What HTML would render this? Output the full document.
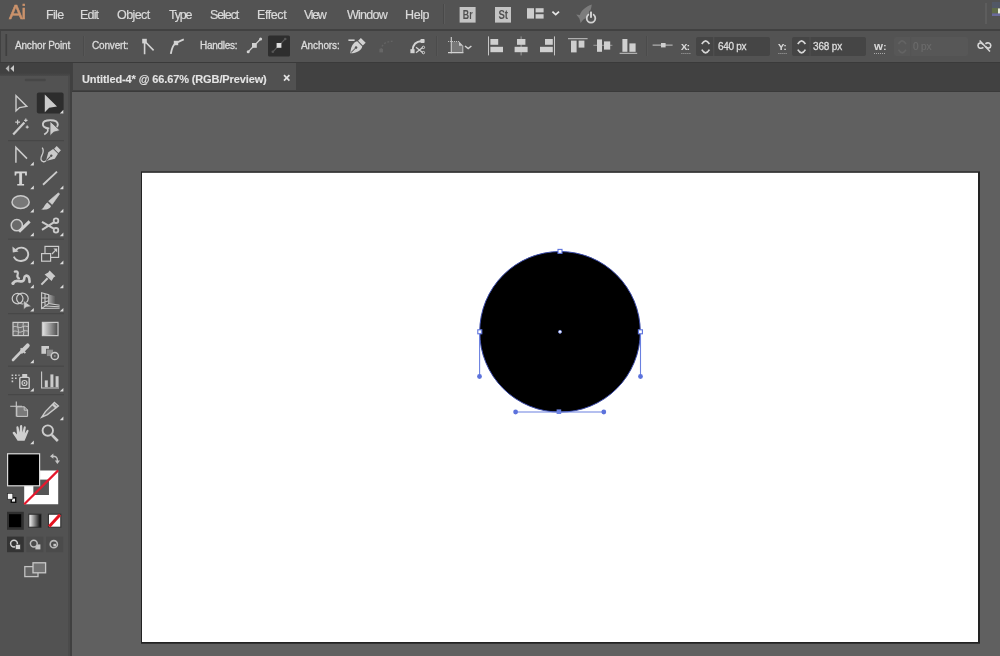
<!DOCTYPE html>
<html>
<head>
<meta charset="utf-8">
<title>Untitled-4* @ 66.67% (RGB/Preview)</title>
<style>
html,body{margin:0;padding:0;}
body{width:1000px;height:656px;overflow:hidden;position:relative;background:#606060;font-family:"Liberation Sans",sans-serif;color:#dcdcdc;}
.abs{position:absolute;}
#menubar{left:0;top:0;width:1000px;height:29px;background:#535353;}
#menuline{left:0;top:29px;width:1000px;height:2px;background:#414141;}
#ctrlbar{left:0;top:31px;width:1000px;height:31px;background:#535353;}
#strip{left:0;top:62px;width:1000px;height:30px;background:#414141;border-top:1px solid #3a3a3a;border-bottom:1px solid #3a3a3a;box-sizing:border-box;}
#tab{left:73px;top:63px;width:223px;height:27px;background:#515151;}
#toolhead{left:0;top:63px;width:70px;height:13px;background:linear-gradient(#414141 0,#414141 10px,#4a4a4a 13px);}
#toolbar{left:0;top:76px;width:70px;height:580px;background:#525252;border-right:2px solid #4b4b4b;box-sizing:border-box;}
#toolsep{left:70px;top:63px;width:2px;height:593px;background:#404040;}
#canvas{left:72px;top:92px;width:928px;height:564px;background:#606060;}
#artboard{left:141px;top:171px;width:838px;height:472px;background:#fff;border:1px solid #151515;box-sizing:border-box;}
.t{position:absolute;white-space:nowrap;line-height:1;will-change:transform;}
.fld{position:absolute;top:37px;height:19px;background:#454545;border-radius:2px;}
svg{position:absolute;left:0;top:0;will-change:transform;}
</style>
</head>
<body>
<div id="menubar" class="abs"></div>
<div id="menuline" class="abs"></div>
<div id="ctrlbar" class="abs"></div>
<div id="strip" class="abs"></div>
<div id="tab" class="abs"></div>
<div id="canvas" class="abs"></div>
<div id="toolhead" class="abs"></div>
<div id="toolbar" class="abs"></div>
<div id="toolsep" class="abs"></div>
<div class="fld" style="left:696px;width:74px;"></div>
<div class="fld" style="left:792px;width:74px;"></div>
<div class="fld" style="left:894px;width:74px;background:#575757;"></div>
<span class="t" style="left:8.80px;top:2.35px;font-size:20.5px;color:#cc936c;letter-spacing:-1.073px;-webkit-text-stroke:0.55px #cc936c;">Ai</span>
<span class="t" style="left:45.80px;top:8.75px;font-size:12.5px;color:#dadada;letter-spacing:-0.663px;-webkit-text-stroke:0.2px #dadada;">File</span>
<span class="t" style="left:79.80px;top:8.75px;font-size:12.5px;color:#dadada;letter-spacing:-0.822px;-webkit-text-stroke:0.2px #dadada;">Edit</span>
<span class="t" style="left:117.20px;top:8.75px;font-size:12.5px;color:#dadada;letter-spacing:-0.571px;-webkit-text-stroke:0.2px #dadada;">Object</span>
<span class="t" style="left:168.60px;top:8.75px;font-size:12.5px;color:#dadada;letter-spacing:-1.249px;-webkit-text-stroke:0.2px #dadada;">Type</span>
<span class="t" style="left:210.20px;top:8.75px;font-size:12.5px;color:#dadada;letter-spacing:-1.094px;-webkit-text-stroke:0.2px #dadada;">Select</span>
<span class="t" style="left:257.40px;top:8.75px;font-size:12.5px;color:#dadada;letter-spacing:-0.412px;-webkit-text-stroke:0.2px #dadada;">Effect</span>
<span class="t" style="left:304.20px;top:8.75px;font-size:12.5px;color:#dadada;letter-spacing:-1.347px;-webkit-text-stroke:0.2px #dadada;">View</span>
<span class="t" style="left:347.20px;top:8.75px;font-size:12.5px;color:#dadada;letter-spacing:-0.726px;-webkit-text-stroke:0.2px #dadada;">Window</span>
<span class="t" style="left:405.40px;top:8.75px;font-size:12.5px;color:#dadada;letter-spacing:-0.385px;-webkit-text-stroke:0.2px #dadada;">Help</span>
<span class="t" style="left:14.60px;top:41.20px;font-size:10px;color:#dcdcdc;letter-spacing:-0.189px;-webkit-text-stroke:0.3px #dcdcdc;">Anchor Point</span>
<span class="t" style="left:92.20px;top:41.20px;font-size:10px;color:#dcdcdc;letter-spacing:-0.174px;-webkit-text-stroke:0.3px #dcdcdc;">Convert:</span>
<span class="t" style="left:200.40px;top:41.20px;font-size:10px;color:#dcdcdc;letter-spacing:-0.270px;-webkit-text-stroke:0.3px #dcdcdc;">Handles:</span>
<span class="t" style="left:301.00px;top:41.20px;font-size:10px;color:#dcdcdc;letter-spacing:-0.098px;-webkit-text-stroke:0.3px #dcdcdc;">Anchors:</span>
<span class="t" style="left:681.40px;top:42.05px;font-size:9.5px;color:#dcdcdc;letter-spacing:-0.536px;font-weight:bold;-webkit-text-stroke:0.1px #dcdcdc;">X:</span>
<span class="t" style="left:778.40px;top:42.05px;font-size:9.5px;color:#dcdcdc;letter-spacing:-0.231px;font-weight:bold;-webkit-text-stroke:0.1px #dcdcdc;">Y:</span>
<span class="t" style="left:873.80px;top:42.05px;font-size:9.5px;color:#dcdcdc;letter-spacing:0.405px;font-weight:bold;-webkit-text-stroke:0.1px #dcdcdc;">W:</span>
<span class="t" style="left:717.60px;top:41.70px;font-size:10px;color:#dcdcdc;letter-spacing:-0.325px;-webkit-text-stroke:0.3px #dcdcdc;">640 px</span>
<span class="t" style="left:812.80px;top:41.70px;font-size:10px;color:#dcdcdc;letter-spacing:-0.165px;-webkit-text-stroke:0.3px #dcdcdc;">368 px</span>
<span class="t" style="left:912.60px;top:41.70px;font-size:10px;color:#6b6b6b;letter-spacing:-0.167px;-webkit-text-stroke:0.2px #6b6b6b;">0 px</span>
<span class="t" style="left:82.20px;top:73.50px;font-size:11px;color:#e4e4e4;letter-spacing:-0.117px;font-weight:bold;-webkit-text-stroke:0.1px #e4e4e4;">Untitled-4* @ 66.67% (RGB/Preview)</span>
<svg id="icons" width="1000" height="656" viewBox="0 0 1000 656">
<!-- artwork -->
<rect x="141" y="171.4" width="839" height="472.3" fill="#222"/>
<rect x="142" y="172.8" width="836" height="469.2" fill="#fff"/>
<circle cx="560" cy="331.8" r="80.3" fill="#000"/>

<!-- ===== menu bar icons ===== -->
<g id="appbar">
<rect x="443" y="4" width="1" height="20" fill="#494949"/>
<rect x="444" y="4" width="1" height="20" fill="#5b5b5b"/>
<rect x="459.6" y="7" width="16" height="15.6" fill="#c4c4c4"/>
<text x="462.8" y="19" font-family="Liberation Sans, sans-serif" font-size="12" font-weight="bold" fill="#505050" textLength="9.8" lengthAdjust="spacingAndGlyphs">Br</text>
<rect x="495" y="7" width="16" height="15.6" fill="#c4c4c4"/>
<text x="498.4" y="19" font-family="Liberation Sans, sans-serif" font-size="12" font-weight="bold" fill="#505050" textLength="9.6" lengthAdjust="spacingAndGlyphs">St</text>
<rect x="527" y="8.2" width="7" height="10.4" fill="#cdcdcd"/>
<rect x="535.6" y="8.2" width="8" height="4.2" fill="#cdcdcd"/>
<rect x="535.6" y="14.2" width="8" height="4.4" fill="#cdcdcd"/>
<path d="M552.4 11.6 L555.7 14.6 L559 11.6" fill="none" stroke="#e6e6e6" stroke-width="1.8"/>
<!-- gpu rocket + power -->
<path d="M591.8 4.5 C586 6.5 581.5 10 579.8 15 L576.2 14.6 L579.4 18.4 L580.6 23 L583.4 19.6 C587 18 591 12 591.8 4.5 Z" fill="#7c7c7c"/>
<circle cx="591" cy="18.3" r="4.3" fill="#535353" stroke="#d2d2d2" stroke-width="1.8"/>
<rect x="589.1" y="10.8" width="3.8" height="7" fill="#535353"/>
<rect x="590.1" y="11.6" width="1.8" height="6.2" fill="#dcdcdc"/>
<rect x="985" y="3" width="2" height="21" fill="#5d5d5d"/>
<rect x="992" y="2" width="8" height="6" fill="#525866"/>
<rect x="992" y="8" width="6" height="5.4" fill="#5f6b48"/>
<rect x="998" y="8.4" width="2" height="6" fill="#e8ecd8"/>
<rect x="992" y="13.4" width="8" height="2.6" fill="#6a6a9a"/>
</g>

<!-- ===== control bar ===== -->
<g id="ctrl" fill="none" stroke="#d2d2d2" stroke-width="1.3">
<!-- gripper -->
<rect x="5.4" y="34" width="1.7" height="22" fill="#3f3f3f" stroke="none"/>
<rect x="0" y="31" width="1" height="31" fill="#424242" stroke="none"/>
<!-- separators -->
<rect x="83" y="36" width="1" height="20" fill="#4b4b4b" stroke="none"/>
<rect x="84" y="36" width="1" height="20" fill="#575757" stroke="none"/>
<rect x="436" y="36" width="1" height="20" fill="#4b4b4b" stroke="none"/>
<rect x="437" y="36" width="1" height="20" fill="#575757" stroke="none"/>
<rect x="646" y="36" width="1" height="20" fill="#4b4b4b" stroke="none"/>
<rect x="647" y="36" width="1" height="20" fill="#575757" stroke="none"/>
<!-- convert to corner -->
<path d="M144.6 42 L144.6 54.2 M145 41.5 L153.6 50.4" stroke-width="1.6"/>
<rect x="142.2" y="38.8" width="4.6" height="4.6" fill="#d2d2d2" stroke="none"/>
<!-- convert to smooth -->
<path d="M170.8 53.8 C172 47 173 44.5 176 43 C179 41.5 181 40.5 183.8 39.4" stroke-width="1.9"/>
<rect x="173.8" y="40.8" width="4.4" height="4.4" fill="#d2d2d2" stroke="none"/>
<!-- handles: show -->
<path d="M248.4 51.6 L260.4 39.2"/>
<circle cx="248.2" cy="51.8" r="1.5" fill="#d2d2d2" stroke="none"/>
<circle cx="260.6" cy="39" r="1.5" fill="#d2d2d2" stroke="none"/>
<rect x="252" y="43" width="4.8" height="4.8" fill="#d2d2d2" stroke="none"/>
<!-- handles: hide (selected) -->
<rect x="268" y="35.6" width="22" height="20.8" rx="1.5" fill="#2e2e2e" stroke="none"/>
<path d="M272.8 51.8 L285 39.2" stroke="#5a5a5a" stroke-width="1.2"/>
<circle cx="285.2" cy="39" r="1.3" fill="#575757" stroke="none"/>
<circle cx="272.8" cy="51.8" r="1.3" fill="#575757" stroke="none"/>
<rect x="276.6" y="43" width="4.8" height="4.8" fill="#dedede" stroke="none"/>
</g>
<g id="ctrl2" fill="none" stroke="#d2d2d2" stroke-width="1.3">
<!-- remove anchor pen -->
<g transform="translate(357.2 46.4) rotate(45)">
<path d="M-3.4 -8.6 L3.4 -8.6 L3.4 -4.6 L-3.4 -4.6 Z" fill="#d2d2d2" stroke="none"/>
<path d="M-3.6 -3.6 L3.6 -3.6 C5.6 0 4.6 4.4 0 9.8 C-4.6 4.4 -5.6 0 -3.6 -3.6 Z" fill="#d2d2d2" stroke="none"/>
<path d="M0 8.6 L0 2.6" stroke="#535353" stroke-width="1"/>
<circle cx="0" cy="1.6" r="1.3" fill="#535353" stroke="none"/>
</g>
<path d="M348.4 40.2 L354.6 40.2" stroke-width="1.6"/>
<!-- connect endpoints (disabled) -->
<path d="M381 50 C381.5 45 385 41.5 392.5 41.2" stroke="#646464" stroke-width="1.4" stroke-dasharray="2 1.6"/>
<rect x="379.4" y="48.8" width="3.6" height="3.6" fill="#666" stroke="none"/>
<!-- cut path -->
<path d="M412.6 50 C413 44.6 416.4 41.4 421.6 41" stroke-width="1.9"/>
<rect x="410.4" y="49.2" width="4.2" height="4" fill="#d2d2d2" stroke="none"/>
<rect x="420.4" y="39" width="4.2" height="4" rx="0.8" fill="#d2d2d2" stroke="none"/>
<path d="M416 52.8 L422.6 47.6 M416 47.2 L422.6 52.4" stroke-width="1.3"/>
<circle cx="423.4" cy="47.4" r="1.2" stroke-width="1"/>
<circle cx="423.4" cy="52.6" r="1.2" stroke-width="1"/>
<!-- isolate -->
<path d="M451.3 37 L451.3 53.4 M448 52.6 L463.4 52.6" stroke-width="1.1"/>
<path d="M448 41.5 L459 41.5" stroke-width="1" stroke="#bdbdbd" stroke-dasharray="1.2 0.8"/>
<path d="M452 42 L459.2 42 L462.8 45.8 L462.8 52 L452 52 Z" fill="#777" stroke="none"/>
<path d="M459 41.4 L463.2 45.8 L459 45.8 Z" fill="#c8c8c8" stroke="none"/>
<path d="M462.8 45.6 L462.8 52.6" stroke-width="1" stroke="#c4c4c4"/>
<path d="M465 46 L468.2 48.6 L471.4 46" stroke-width="1.5"/>
</g>
<!-- align icons -->
<g id="align" fill="#cfcfcf" stroke="none">
<rect x="488" y="36.4" width="1" height="19" fill="#c6c6c6"/>
<rect x="490.4" y="39" width="7.8" height="5.8"/>
<rect x="490.4" y="46.8" width="12.6" height="5.4"/>
<rect x="520.6" y="36.4" width="1" height="19" fill="#9a9a9a"/>
<rect x="517" y="39" width="8.4" height="5.8"/>
<rect x="514.6" y="46.8" width="13" height="5.4"/>
<rect x="554" y="36.4" width="1" height="19" fill="#c6c6c6"/>
<rect x="545" y="39" width="7.8" height="5.8"/>
<rect x="540" y="46.8" width="12.8" height="5.4"/>
<rect x="568" y="38.2" width="19.6" height="1" fill="#c6c6c6"/>
<rect x="571" y="40.6" width="5.6" height="11.8"/>
<rect x="578.6" y="40.6" width="5.8" height="7"/>
<rect x="593.4" y="44.8" width="19" height="1" fill="#9a9a9a"/>
<rect x="597" y="39.4" width="5" height="12.4"/>
<rect x="604" y="41.4" width="6.2" height="8.2"/>
<rect x="619.6" y="52.8" width="17.6" height="1" fill="#c6c6c6"/>
<rect x="622.4" y="39" width="5" height="12.8"/>
<rect x="629.4" y="43.4" width="6.2" height="8.4"/>
<!-- distribute -->
<rect x="652.6" y="44.6" width="20" height="1" fill="#c6c6c6"/>
<rect x="661" y="43" width="4.6" height="4.4"/>
</g>
<!-- spinners, underline dots, link -->
<g id="fields" fill="none" stroke="#d6d6d6" stroke-width="1.7">
<path d="M701.8 44 Q705.6 37.6 709.4 44 M701.8 49.6 Q705.6 56 709.4 49.6"/>
<path d="M797.8 44 Q801.6 37.6 805.4 44 M797.8 49.6 Q801.6 56 805.4 49.6"/>
<path d="M898.4 44 Q902.2 37.6 906 44 M898.4 49.6 Q902.2 56 906 49.6" stroke="#636363"/>
<path d="M681.4 53.5 L690.4 53.5 M778.4 53.5 L787 53.5 M874 53.5 L886 53.5" stroke="#a8a8a8" stroke-width="1" stroke-dasharray="1 1"/>
<rect x="713" y="37" width="1.4" height="19" fill="#4e4e4e" stroke="none"/>
<rect x="809.4" y="37" width="1.4" height="19" fill="#4e4e4e" stroke="none"/>
<rect x="910" y="36" width="1.2" height="20" fill="#545454" stroke="none"/>
<!-- broken link -->
<path d="M983 44.6 C981 42 978 43 978 45.6 C978 48.4 981.4 49 983.4 47.4" stroke-width="1.6"/>
<path d="M985.6 46.6 C987.6 49 990.8 48.4 990.8 45.6 C990.8 43 987.6 42 985.4 43.8" stroke-width="1.6"/>
<path d="M979.6 40.4 L990 51.4" stroke-width="1.5"/>
</g>

<!-- ===== toolbar ===== -->
<g id="tb-chrome" stroke="none">
<path d="M5.6 68.5 L9.2 65.1 L9.2 71.9 Z" fill="#b4b4b4"/><path d="M10.4 68.5 L14 65.1 L14 71.9 Z" fill="#cacaca"/>
<path d="M26 80 L44.6 80" stroke="#474747" stroke-width="2.6" stroke-linecap="round" fill="none"/>
<rect x="8" y="140" width="56" height="1.2" fill="#474747"/>
<rect x="8" y="238.6" width="56" height="1.2" fill="#474747"/>
<rect x="8" y="313" width="56" height="1.2" fill="#474747"/>
<rect x="8" y="365.6" width="56" height="1.2" fill="#474747"/>
<rect x="8" y="394" width="56" height="1.2" fill="#474747"/>
</g>
<g id="tools" fill="none" stroke="#cbcbcb" stroke-width="1.5" stroke-linejoin="miter">
<!-- selection (outline arrow) -->
<path d="M16 95.6 L16 111 L19.6 107.6 L26.8 106.4 Z" stroke-width="1.4"/>
<!-- direct selection (selected) -->
<rect x="36.8" y="92.4" width="26.8" height="21" rx="2" fill="#2d2d2d" stroke="none"/>
<path d="M44.8 94.4 L44.8 112.2 L49.2 107.8 L57 106.6 Z" fill="#cbcbcb" stroke="none"/>
<!-- magic wand -->
<path d="M13.2 134.4 L24.4 122.4" stroke-width="2.2"/>
<path d="M17.6 119.8 L17.6 124.6 M15.2 122.2 L20 122.2 M25.8 118.6 L25.8 122 M24.1 120.3 L27.5 120.3 M27.2 125.6 L27.2 128.6 M25.7 127.1 L28.7 127.1" stroke-width="1.2"/>
<!-- lasso -->
<path d="M49.6 128.4 C44.6 128.6 42.6 126.2 42.9 123.8 C43.2 121 46.6 120.2 50.4 120.2 C54.8 120.2 57.7 121.8 57.8 124.4 C57.9 125.6 57.4 126.6 56.6 127.2" stroke-width="1.9"/>
<path d="M45.4 127.2 C47.8 128.4 48.6 130.6 47.2 132 C46.2 133.2 45.2 134 44.2 134.6" stroke-width="1.7"/>
<path d="M50 121.2 L50 135.8 L53.6 132.2 L60 130.5 Z" fill="#cbcbcb" stroke="#535353" stroke-width="0.8"/>
<!-- anchor point tool -->
<path d="M15.9 162.8 L15.9 147.4 L27 158.6" stroke-width="1.5"/>
<!-- curvature tool -->
<g transform="translate(52 155) rotate(45)">
<path d="M-3 -9.6 L3 -9.6 L3 -6 L-3 -6 Z" fill="#cbcbcb" stroke="none"/>
<path d="M-3.4 -5 L3.4 -5 L4.6 0.6 L0 8.6 L-4.6 0.6 Z" fill="#cbcbcb" stroke="none"/>
<path d="M0 8 L0 2" stroke="#535353" stroke-width="1"/>
<circle cx="0" cy="1" r="1.2" fill="#535353" stroke="none"/>
</g>
<path d="M42.2 147.6 C44.2 150.4 43.2 153 41.8 155.6 C40.4 158.4 40.6 161 43 161.6 C44.4 162 45.4 161.4 46 160.6" stroke-width="1.3"/>
<!-- line tool -->
<path d="M43 184.8 L57 171.6" stroke-width="1.9"/>
<!-- ellipse tool -->
<ellipse cx="20.6" cy="202.2" rx="8.6" ry="6.4" fill="#787878" stroke-width="1.5"/>
<!-- paintbrush -->
<path d="M58.4 192.8 L59.6 194 L52.2 204.4 L48.6 201.2 Z" fill="#cbcbcb" stroke="#cbcbcb" stroke-width="0.6" stroke-linejoin="round"/>
<path d="M47.4 202.6 L51 206 C50 209.4 45.4 210 41.2 209.5 C44.6 207.8 44.4 204.6 47.4 202.6 Z" fill="#cbcbcb" stroke="none"/>
<!-- shaper tool -->
<circle cx="16.8" cy="225.2" r="5.6" fill="#6a6a6a" stroke-width="1.5"/>
<path d="M19 231.6 L29.6 221.4" stroke-width="3" stroke="#d0d0d0"/>
<!-- scissors -->
<path d="M42 221.8 L54.2 228.8 M42 229.8 L54.2 222.2" stroke-width="2"/>
<circle cx="56" cy="220.7" r="2.3" stroke-width="1.8"/>
<circle cx="56" cy="230.3" r="2.3" stroke-width="1.8"/>
<!-- rotate -->
<path d="M15.6 250.4 C18.6 246.6 24.6 246.6 27.2 250.8 C29.6 254.8 27.4 260 22.4 260.8 C18.6 261.4 15.2 259.6 13.8 256.6" stroke-width="1.9"/>
<path d="M12.4 246.6 L12.8 252.4 L18.6 251.6 Z" fill="#cbcbcb" stroke="none"/>
<!-- scale -->
<rect x="45" y="246.4" width="13.6" height="11" stroke-width="1.2"/>
<rect x="41.6" y="253.6" width="9" height="7.6" stroke-width="1.2" fill="#535353"/>
<path d="M52 254 L56.4 249.4" stroke-width="1.3"/>
<path d="M53.4 248.6 L57.2 248.6 L57.2 252.4 Z" fill="#cbcbcb" stroke="none"/>
<!-- width/warp tool -->
<path d="M13 283 C15 280 17.4 280.6 19.6 281.2 C23.4 282.2 24.4 279.6 24.4 277.6 C24.4 275.6 27 274.8 28.4 276.6 C29.6 278.2 29.4 280.2 29.6 282" stroke-width="2.6" stroke-linecap="round"/>
<path d="M14.8 271.6 C17.4 270.6 18.4 272.6 17.6 274.6 C17 276.2 17.4 277.6 19 278.4" stroke-width="2.2" stroke-linecap="round"/>
<circle cx="13" cy="283.4" r="1.6" fill="#cbcbcb" stroke="none"/>
<!-- puppet pin -->
<path d="M49.6 270.6 L55.4 276.2 L53.6 277.4 L51.6 281 L44.6 274.4 L48.2 272.4 Z" fill="#cbcbcb" stroke="none"/>
<path d="M47.6 278.2 L41.4 284.6" stroke-width="2"/>
<!-- shape builder -->
<ellipse cx="17.6" cy="298.6" rx="5.4" ry="5.2" stroke-width="1.2"/>
<ellipse cx="22.4" cy="298.6" rx="5.8" ry="5.4" stroke-width="1.2"/>
<path d="M23.6 300.6 L23.8 309.6 L26.2 307.2 L31.4 306.4 Z" fill="#cbcbcb" stroke="#535353" stroke-width="0.6"/>
<!-- perspective grid -->
<path d="M41.6 292.8 L48.6 294.6 L48.6 303.6 L41.6 308.4 Z M45 293.8 L45 306 M41.6 298 L48.6 297.8 M41.6 303 L48.6 300.8" stroke-width="1.1"/>
<path d="M48.6 294.6 L55.6 296.2 L55.6 304.6 L48.6 303.6 Z" fill="url(#gradPersp)" stroke="none"/>
<path d="M48.6 303.6 L59.6 305.2 M41.6 308.4 L59.6 308.2 M45.4 306 L59.6 306.8" stroke-width="1"/>
<!-- mesh -->
<rect x="13" y="322.4" width="15.4" height="13.2" fill="#6e6e6e" stroke-width="1.2"/>
<path d="M13 327 C16 325 19 329 22 327 C25 325 26.6 327 28.4 326.4 M13 331.6 C16 329.6 19 333.6 22 331.6 C25 329.6 26.6 331.4 28.4 331 M18 322.4 C16.6 326 19.6 330 18 335.6 M23.4 322.4 C22 326 25 330 23.4 335.6" stroke-width="0.9"/>
<!-- gradient -->
<rect x="42.4" y="322.4" width="15.6" height="13.2" fill="url(#gradTool)" stroke-width="1.2"/>
<!-- eyedropper -->
<path d="M13 360 L23 349.6" stroke-width="2.6" stroke-linecap="round"/>
<path d="M22 351.4 L27.6 345.6" stroke-width="4.2" stroke-linecap="round"/>
<path d="M20.6 348.4 L25.4 353.2" stroke-width="1.8"/>
<!-- blend -->
<rect x="41.4" y="346" width="7.6" height="7.8" fill="#cbcbcb" stroke="none"/>
<rect x="46.4" y="349.2" width="7" height="7.2" fill="#8c8c8c" stroke="#535353" stroke-width="0.8"/>
<circle cx="54.8" cy="356" r="3.6" fill="#535353" stroke-width="1.5"/>
<circle cx="54.8" cy="356" r="1" fill="#8a8a8a" stroke="none"/>
<!-- symbol sprayer -->
<path d="M11.6 375.2 L13.2 375.2 M15 375.2 L16.6 375.2 M18.4 375.2 L19.6 375.2 M11.6 378.2 L13.2 378.2 M15 378.2 L16.6 378.2 M11.6 381.4 L13.2 381.4" stroke-width="1.6"/>
<rect x="19.8" y="377.4" width="9.4" height="11" rx="1" stroke-width="1.4"/>
<rect x="22.2" y="374" width="5" height="3" fill="#cbcbcb" stroke="none"/>
<circle cx="24.5" cy="383" r="2.5" stroke-width="1.2"/>
<circle cx="24.5" cy="383" r="0.9" fill="#cbcbcb" stroke="none"/>
<!-- column graph -->
<path d="M41.6 371.4 L41.6 388 L59 388" stroke-width="1.1"/>
<rect x="44.8" y="380.4" width="3" height="6.8" fill="#cbcbcb" stroke="none"/>
<rect x="50.4" y="374.4" width="3" height="12.8" fill="#cbcbcb" stroke="none"/>
<rect x="55.6" y="376.2" width="3" height="11" fill="#cbcbcb" stroke="none"/>
<!-- artboard tool -->
<path d="M16.3 401.4 L16.3 416.6 M10.2 406.3 L22 406.3" stroke-width="1.1"/>
<path d="M16.8 406.8 L24.4 406.8 L27.6 410 L27.6 416.4 L16.8 416.4 Z" fill="#7a7a7a" stroke-width="1"/>
<path d="M24.2 406.6 L24.2 410.2 L27.8 410.2" stroke-width="0.9"/>
<!-- slice tool -->
<path d="M54.4 402.4 L58.4 406 L47.4 414.6 L41.8 417.2 L45.4 411.6 Z" stroke-width="1.4" fill="#6a6a6a"/>
<path d="M52.6 404.2 L56.6 407.8" stroke-width="2.4"/>
<!-- hand -->
<path d="M17.6 440.8 C16 438 14.6 435.6 12.8 433.4 C12.2 432.2 13.6 431.2 14.8 432 L17 434.4 L16.4 427.6 C16.4 426 18.4 426 18.6 427.4 L19.6 432.4 L20 426 C20.2 424.6 22.2 424.6 22.2 426.2 L22.4 432.4 L23.8 427 C24.2 425.6 26 426 25.8 427.6 L24.8 433.4 L26.6 430.4 C27.4 429.2 29 430 28.4 431.4 C27 434.6 26 437.6 24.6 440.8 Z" fill="#cfcfcf" stroke="none"/>
<!-- zoom -->
<circle cx="47.8" cy="430.6" r="5.2" stroke-width="1.9"/>
<path d="M51.8 434.8 L57.8 441" stroke-width="2.6"/>
</g>
<!-- flyout corner triangles -->
<g id="tb-tri" fill="#dcdcdc" stroke="none">
<path d="M63.4 109.8 L63.4 113.4 L59.8 113.4 Z"/>
<path d="M33.8 161.8 L33.8 165.4 L30.2 165.4 Z"/>
<path d="M33.8 185.6 L33.8 189.2 L30.2 189.2 Z"/>
<path d="M63.4 185.6 L63.4 189.2 L59.8 189.2 Z"/>
<path d="M33.8 208.8 L33.8 212.4 L30.2 212.4 Z"/>
<path d="M63.4 208.8 L63.4 212.4 L59.8 212.4 Z"/>
<path d="M33.8 232.6 L33.8 236.2 L30.2 236.2 Z"/>
<path d="M63.4 232.6 L63.4 236.2 L59.8 236.2 Z"/>
<path d="M33.8 260.6 L33.8 264.2 L30.2 264.2 Z"/>
<path d="M63.4 260.6 L63.4 264.2 L59.8 264.2 Z"/>
<path d="M33.8 284.6 L33.8 288.2 L30.2 288.2 Z"/>
<path d="M63.4 284.6 L63.4 288.2 L59.8 288.2 Z"/>
<path d="M33.8 308 L33.8 311.6 L30.2 311.6 Z"/>
<path d="M63.4 308 L63.4 311.6 L59.8 311.6 Z"/>
<path d="M33.8 359.6 L33.8 363.2 L30.2 363.2 Z"/>
<path d="M33.8 388 L33.8 391.6 L30.2 391.6 Z"/>
<path d="M63.4 388 L63.4 391.6 L59.8 391.6 Z"/>
<path d="M63.4 416.6 L63.4 420.2 L59.8 420.2 Z"/>
<path d="M33.8 440.6 L33.8 444.2 L30.2 444.2 Z"/>
</g>
<defs>
<linearGradient id="gradTool" x1="0" y1="0" x2="1" y2="0"><stop offset="0" stop-color="#e4e4e4"/><stop offset="1" stop-color="#4a4a4a"/></linearGradient>
<linearGradient id="gradPersp" x1="0" y1="0" x2="1" y2="0"><stop offset="0" stop-color="#a8a8a8"/><stop offset="1" stop-color="#a8a8a8" stop-opacity="0"/></linearGradient>
<linearGradient id="gradBtn" x1="0" y1="0" x2="1" y2="0"><stop offset="0" stop-color="#ffffff"/><stop offset="1" stop-color="#000000"/></linearGradient>
</defs>
<text x="20.7" y="185" font-family="Liberation Serif, serif" font-size="19.5" fill="#d6d6d6" stroke="#d6d6d6" stroke-width="0.9" text-anchor="middle">T</text>

<!-- ===== fill / stroke ===== -->
<g id="fillstroke" stroke="none">
<!-- stroke swatch (none) -->
<path d="M24.2 470.4 L58.2 470.4 L58.2 504.2 L24.2 504.2 Z M33.6 479.8 L33.6 495 L48.8 495 L48.8 479.8 Z" fill="#ffffff" fill-rule="evenodd"/>
<rect x="33.6" y="479.8" width="15.2" height="15.2" fill="#555"/>
<path d="M24.2 504.2 L58.2 470.4" stroke="#e5182d" stroke-width="2.2" fill="none"/>
<!-- fill swatch -->
<rect x="7" y="453.2" width="33.2" height="33.2" fill="#dadada"/>
<rect x="8.2" y="454.4" width="30.8" height="30.8" fill="#000"/>
<!-- swap arrow -->
<path d="M52.4 456.2 C56 456 57.6 457.8 57.4 461.2" fill="none" stroke="#c4c4c4" stroke-width="1.4"/>
<path d="M50 456.2 L53.4 453.6 L53.4 458.8 Z" fill="#c4c4c4"/>
<path d="M57.4 464 L54.8 460.6 L60 460.6 Z" fill="#c4c4c4"/>
<!-- default fill/stroke -->
<rect x="10.6" y="497" width="5.8" height="6" fill="#111" stroke="#eee" stroke-width="0"/>
<rect x="12" y="498.6" width="3" height="3" fill="#eee"/>
<rect x="7.6" y="493.4" width="5.2" height="5.8" fill="#f4f4f4" stroke="#222" stroke-width="0.6"/>
<!-- color / gradient / none -->
<rect x="7" y="511.8" width="16.8" height="18" fill="#303030"/>
<rect x="9" y="514.2" width="12.2" height="13" fill="#000"/>
<rect x="28.8" y="514.2" width="12.2" height="13" fill="url(#gradBtn)" stroke="#2a2a2a" stroke-width="1"/>
<rect x="48.4" y="514.2" width="12.4" height="13" fill="#fff" stroke="#2a2a2a" stroke-width="1"/>
<path d="M49.2 526.6 L60 514.8" stroke="#e5121f" stroke-width="3" fill="none"/>
<!-- drawing modes -->
<rect x="7" y="536.6" width="16.8" height="15.6" fill="#343434"/>
<rect x="26.4" y="536.6" width="17" height="15.6" fill="#4b4b4b"/>
<rect x="46" y="536.6" width="17.2" height="15.6" fill="#4b4b4b"/>
<circle cx="14" cy="543.6" r="3.4" fill="none" stroke="#cfcfcf" stroke-width="1.5"/>
<rect x="15.4" y="544.4" width="5" height="5" fill="#d6d6d6" stroke="#343434" stroke-width="0.6"/>
<rect x="35.4" y="544.4" width="5" height="5" fill="#c6c6c6"/>
<circle cx="33.8" cy="543.6" r="3.4" fill="#4b4b4b" stroke="#bdbdbd" stroke-width="1.5"/>
<circle cx="53.8" cy="544.2" r="3.6" fill="none" stroke="#b8b8b8" stroke-width="1.6"/>
<rect x="53.4" y="543.8" width="2.6" height="2.6" fill="#c6c6c6"/>
<!-- screen mode -->
<rect x="24.8" y="566.6" width="13.2" height="10" fill="#626262" stroke="#c2c2c2" stroke-width="1.3"/>
<rect x="33" y="562.8" width="12.6" height="10" fill="#737373" stroke="#c8c8c8" stroke-width="1.3"/>
</g>

<!-- ===== selection overlay on circle ===== -->
<g id="sel" fill="none" stroke="#6a80e0" stroke-width="1.1">
<circle cx="560" cy="331.8" r="80.3" stroke="#3a4aa8" stroke-width="1"/>
<path d="M479.6 332 L479.6 376.4 M640.5 332 L640.5 376.4 M515.6 412 L603.8 412"/>
<circle cx="479.5" cy="376.5" r="2.4" fill="#5c72dc" stroke="none"/>
<circle cx="640.5" cy="376.5" r="2.4" fill="#5c72dc" stroke="none"/>
<circle cx="515.6" cy="412" r="2.4" fill="#5c72dc" stroke="none"/>
<circle cx="603.8" cy="412" r="2.4" fill="#5c72dc" stroke="none"/>
<rect x="558" y="249.4" width="4" height="4" fill="#fff" stroke="#5c72dc"/>
<rect x="477.8" y="329.8" width="4" height="4" fill="#fff" stroke="#5c72dc"/>
<rect x="638.4" y="329.8" width="4" height="4" fill="#fff" stroke="#5c72dc"/>
<rect x="556.6" y="409.4" width="4.6" height="4.6" fill="#6a80e0" stroke="none"/>
<circle cx="560" cy="331.8" r="1.5" fill="#fff" stroke="#7f90e6" stroke-width="0.9"/>
</g>

<!-- tab close -->
<path d="M284 75.2 L289.4 80.6 M289.4 75.2 L284 80.6" fill="none" stroke="#e2e2e2" stroke-width="1.7"/>

</svg>
</body>
</html>
